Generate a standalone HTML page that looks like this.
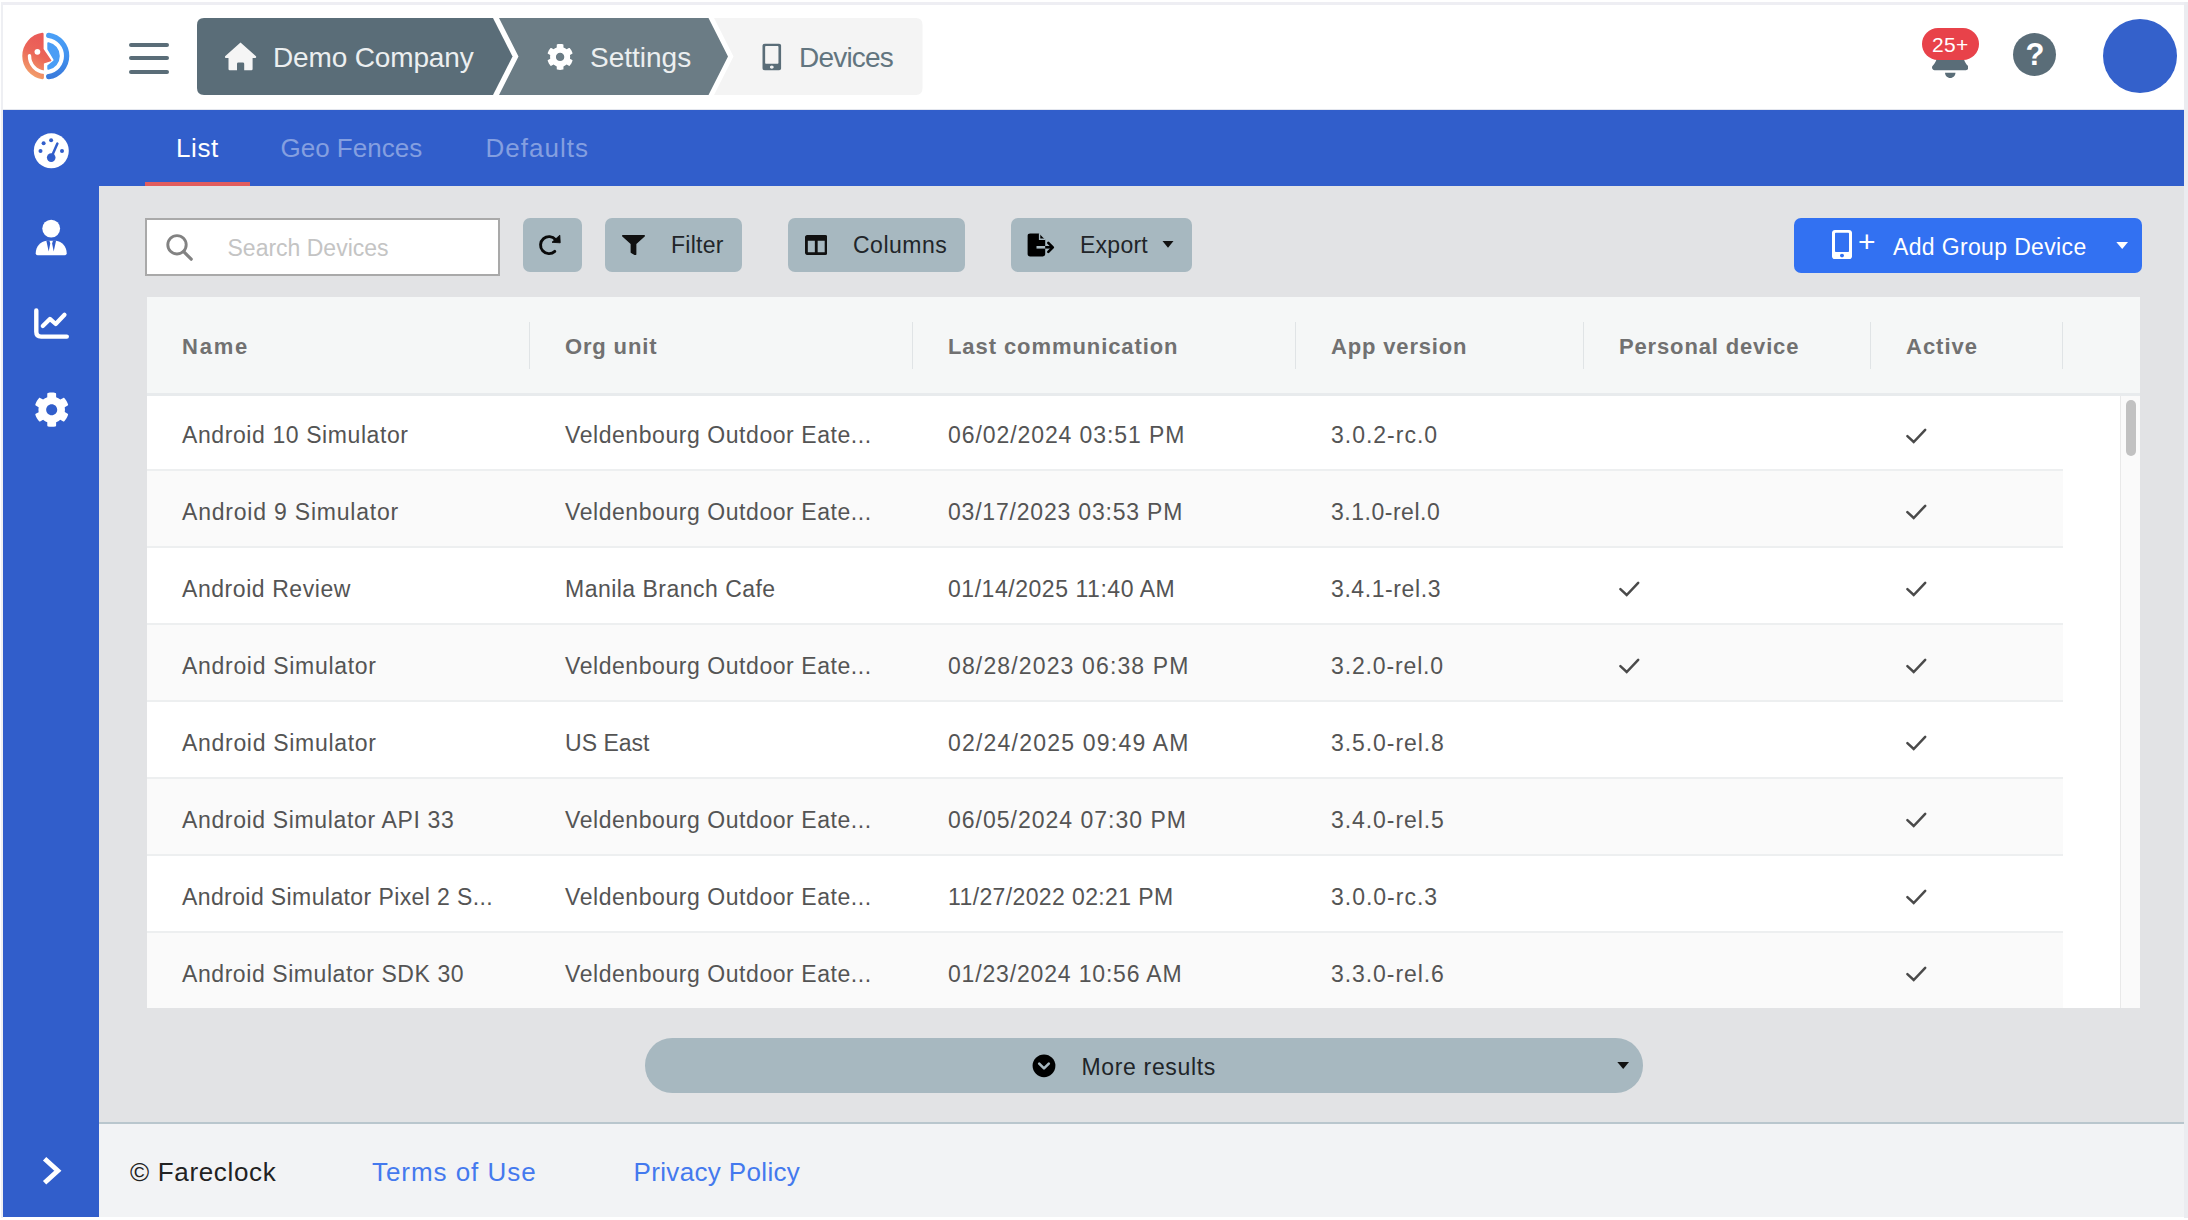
<!DOCTYPE html>
<html lang="en">
<head>
<meta charset="utf-8">
<title>Devices - Fareclock</title>
<style>
*{box-sizing:border-box;margin:0;padding:0}
html,body{width:2188px;height:1220px;overflow:hidden;background:#fff}
body{position:relative;font-family:"Liberation Sans",sans-serif;color:#222}
.abs{position:absolute}
.t{position:absolute;white-space:nowrap;line-height:1}
/* frame */
#frame-top{left:2px;top:2px;width:2186px;height:3px;background:#eeeef3}
#frame-left{left:1.300px;top:2px;width:2.100px;height:1216px;background:#eeeff3}
#frame-right{left:2184px;top:2px;width:4px;height:1216px;background:#ebecf0}
/* header */
#header{left:3.400px;top:5px;width:2180.600px;height:105.600px;background:#fff}
#hdrline{left:3.400px;top:109px;width:2180.600px;height:1.300px;background:#e3e6ee}
/* blue */
#bluebar{left:3.400px;top:110.300px;width:2180.600px;height:76.100px;background:#315ecb}
#sidebar{left:3.400px;top:110.300px;width:95.600px;height:1106.900px;background:#315ecb}
#content{left:99px;top:186.400px;width:2085px;height:937px;background:#e2e3e5}
#footer{left:99px;top:1121.600px;width:2085px;height:95px;background:#f2f3f5;border-top:2px solid #b9c6cd}
.th{font-size:22px;font-weight:700;color:#717171}
.td{font-size:23px;color:#545454}
.ft{font-size:26px}
.btn{border-radius:7px;background:#a7b8c0}
.bt{font-size:23px;letter-spacing:.25px;color:#212529}
</style>
</head>
<body>
<div class="abs" id="header"></div>
<div class="abs" id="hdrline"></div>
<div class="abs" id="bluebar"></div>
<div class="abs" id="content"></div>
<div class="abs" id="sidebar"></div>
<div class="abs" id="footer"></div>
<div class="abs" id="frame-top"></div>
<div class="abs" id="frame-left"></div>
<div class="abs" id="frame-right"></div>
<!--HEADER-->
<!-- logo -->
<svg class="abs" style="left:16px;top:26px" width="60" height="60" viewBox="16 26 60 60">
  <defs>
    <linearGradient id="lg1" gradientUnits="userSpaceOnUse" x1="26" y1="76" x2="46" y2="40"><stop offset="0" stop-color="#f3a56c"/><stop offset="0.6" stop-color="#eb6559"/><stop offset="1" stop-color="#ea5b58"/></linearGradient>
    <linearGradient id="lg2" gradientUnits="userSpaceOnUse" x1="55" y1="36" x2="60" y2="76"><stop offset="0" stop-color="#4a9ff6"/><stop offset="0.5" stop-color="#4293f0"/><stop offset="1" stop-color="#3a7bdc"/></linearGradient>
  </defs>
  <path d="M42.200 32.860 Q43.600 32.700 43.600 34 V49 L51.300 60.200 Q51.600 61 50.800 61.300 L43.900 63.500 V78 Q43.800 79.300 42.200 79.140 A23.400 23.400 0 0 1 42.200 32.860 Z" fill="url(#lg1)"/>
  <path d="M29.500 55.800 A16.200 16.200 0 0 0 44.500 72.200" fill="none" stroke="#fff" stroke-width="3.400" stroke-linecap="round"/>
  <circle cx="37.400" cy="51.800" r="2.900" fill="#fff"/>
  <path d="M48.700 35.400 A20.800 20.800 0 0 1 48.700 76.600" fill="none" stroke="url(#lg2)" stroke-width="5.300" stroke-linecap="round"/>
  <path d="M47.300 43.200 Q47.300 41.900 48.600 42.200 A14.100 14.100 0 0 1 48.600 69.800 Q47.300 70.100 47.300 68.800 V65.400 L53.200 60.800 Q53.800 60.200 53.400 59.500 L47.300 49.300 Z" fill="#4a9df5"/>
</svg>
<!-- hamburger -->
<div class="abs" style="left:129px;top:43px;width:40px;height:4px;border-radius:2px;background:#5a6d78"></div>
<div class="abs" style="left:129px;top:56px;width:40px;height:4px;border-radius:2px;background:#5a6d78"></div>
<div class="abs" style="left:129px;top:69.500px;width:40px;height:4px;border-radius:2px;background:#5a6d78"></div>
<!-- breadcrumb -->
<svg class="abs" style="left:190px;top:10px" width="740" height="95" viewBox="190 10 740 95">
  <path d="M204 18 H493 L512.5 56.5 L493 95 H204 Q197 95 197 88 V25 Q197 18 204 18 Z" fill="#5a6d78"/>
  <path d="M499 18 H708.5 L728 56.5 L708.5 95 H499 L518.5 56.5 Z" fill="#6b7c85"/>
  <path d="M714 18 H916 Q922.5 18 922.5 25 V88 Q922.5 95 916 95 H714 L733.5 56.500 Z" fill="#f4f4f4"/>
  <!-- home icon -->
  <path fill="#f5f5f5" d="M240.500 42.600 L256 56.300 Q256.600 57.500 255.500 58.100 H252.600 V69 Q252.600 70.200 251.400 70.200 H244.200 V63.800 Q244.200 62.400 242.800 62.400 H238.400 Q237 62.400 237 63.800 V70.200 H229.700 Q228.500 70.200 228.500 69 V58.100 H225.600 Q224.500 57.500 225.100 56.300 Z"/>
  <!-- cog -->
  <svg x="546.700" y="43.500" width="26.800" height="26.800" viewBox="0 0 512 512"><path fill="#fff" d="M487.400 315.700l-42.600-24.600c4.300-23.200 4.300-47 0-70.200l42.600-24.600c4.900-2.800 7.100-8.600 5.500-14-11.100-35.600-30-67.800-54.700-94.600-3.800-4.100-10-5.100-14.800-2.300L380.800 110c-17.900-15.400-38.500-27.300-60.800-35.100V25.800c0-5.600-3.900-10.500-9.400-11.700-36.700-8.200-74.300-7.800-109.200 0-5.500 1.200-9.400 6.100-9.400 11.700V75c-22.200 7.900-42.800 19.800-60.800 35.100L88.700 85.500c-4.900-2.800-11-1.900-14.800 2.300-24.700 26.700-43.600 58.900-54.700 94.600-1.700 5.400.6 11.200 5.500 14L67.300 221c-4.300 23.200-4.300 47 0 70.200l-42.600 24.600c-4.900 2.800-7.100 8.600-5.500 14 11.100 35.600 30 67.800 54.700 94.600 3.800 4.100 10 5.100 14.800 2.300l42.600-24.600c17.900 15.400 38.500 27.300 60.800 35.100v49.200c0 5.600 3.900 10.500 9.400 11.700 36.700 8.200 74.300 7.800 109.200 0 5.500-1.200 9.400-6.100 9.400-11.700v-49.200c22.200-7.900 42.800-19.800 60.800-35.100l42.600 24.600c4.900 2.800 11 1.900 14.800-2.300 24.700-26.700 43.600-58.900 54.700-94.600 1.500-5.500-.7-11.300-5.600-14.100zM256 336c-44.100 0-80-35.900-80-80s35.900-80 80-80 80 35.900 80 80-35.900 80-80 80z"/></svg>
  <!-- mobile -->
  <svg x="762.300" y="43.600" width="19" height="26.800" viewBox="0 0 320 512" preserveAspectRatio="none"><path fill="#5a6d78" d="M272 0H48C21.500 0 0 21.500 0 48v416c0 26.500 21.500 48 48 48h224c26.500 0 48-21.500 48-48V48c0-26.500-21.500-48-48-48zM160 480c-17.700 0-32-14.300-32-32s14.300-32 32-32 32 14.300 32 32-14.300 32-32 32zm112-108c0 6.600-5.400 12-12 12H60c-6.600 0-12-5.400-12-12V60c0-6.600 5.400-12 12-12h200c6.600 0 12 5.400 12 12v312z"/></svg>
</svg>
<span class="t" id="bc1" style="left:273px;top:43.600px;font-size:28px;color:#eceff0;letter-spacing:-.15px">Demo Company</span>
<span class="t" id="bc2" style="left:590px;top:43.600px;font-size:28px;color:#eceff0">Settings</span>
<span class="t" id="bc3" style="left:799px;top:44px;font-size:28px;color:#62757f;letter-spacing:-.8px">Devices</span>
<!-- bell -->
<svg class="abs" style="left:1931.700px;top:35.600px" width="36.500" height="42" viewBox="0 0 448 512" preserveAspectRatio="none"><path fill="#5a6d78" d="M224 512c35.320 0 63.970-28.650 63.970-64H160.030c0 35.350 28.650 64 63.970 64zm215.390-149.710c-19.320-20.760-55.470-51.990-55.470-154.290 0-77.700-54.480-139.900-127.940-155.160V32c0-17.670-14.320-32-31.980-32s-31.980 14.330-31.980 32v20.840C118.560 68.100 64.080 130.300 64.080 208c0 102.300-36.150 133.530-55.470 154.290-6 6.450-8.660 14.160-8.610 21.710.11 16.400 12.980 32 32.100 32h383.800c19.120 0 32-15.600 32.100-32 .05-7.550-2.610-15.270-8.610-21.710z"/></svg>
<div class="abs" id="badge" style="left:1921.500px;top:27.500px;width:57px;height:32.500px;border-radius:16.250px;background:#e8424a"></div>
<span class="t" id="badget" style="left:1932px;top:33.500px;font-size:21px;color:#fff;letter-spacing:.3px">25+</span>
<!-- help -->
<div class="abs" style="left:2013px;top:33px;width:43px;height:43px;border-radius:50%;background:#5a6d78"></div>
<span class="t" id="qm" style="left:2025.500px;top:39px;font-size:31px;font-weight:700;color:#fff">?</span>
<!-- avatar -->
<div class="abs" style="left:2103px;top:19px;width:74px;height:74px;border-radius:50%;background:#3461cb"></div>
<!--/HEADER-->
<!--TABS-->
<span class="t" id="tab1" style="left:176px;top:134.500px;font-size:26px;color:#fff;letter-spacing:.6px">List</span>
<span class="t" id="tab2" style="left:280.500px;top:135px;font-size:26px;color:#849fe0">Geo Fences</span>
<span class="t" id="tab3" style="left:485.500px;top:135px;font-size:26px;color:#849fe0;letter-spacing:1px">Defaults</span>
<div class="abs" style="left:145px;top:182px;width:105px;height:4px;background:#e25d5d"></div>
<!--/TABS-->
<!--TOOLBAR-->
<!-- search -->
<div class="abs" style="left:145px;top:218px;width:355px;height:58px;background:#fff;border:2px solid #a9a9a9"></div>
<svg class="abs" style="left:164px;top:232px" width="32" height="32" viewBox="164 232 32 32"><circle cx="177" cy="244.800" r="9.200" fill="none" stroke="#828282" stroke-width="2.900"/><path d="M183.700 251.700 L191.200 259.200" stroke="#828282" stroke-width="3.200" stroke-linecap="round"/></svg>
<span class="t" id="srch" style="left:227.500px;top:236.500px;font-size:23px;color:#c4c4c4">Search Devices</span>
<!-- refresh -->
<div class="abs btn" style="left:522.500px;top:218px;width:59px;height:54px"></div>
<svg class="abs" style="left:536px;top:231px" width="30" height="30" viewBox="536 231 30 30"><path d="M555.600 239.700 A8.500 8.500 0 1 0 554.800 251.400" fill="none" stroke="#0a0a0a" stroke-width="2.900" stroke-linecap="round"/><path d="M559.800 235.200 L560.200 242.800 L552 242.300 Z" fill="#0a0a0a" stroke="#0a0a0a" stroke-width="0.900" stroke-linejoin="round"/></svg>
<!-- filter -->
<div class="abs btn" style="left:605px;top:218px;width:137px;height:54px"></div>
<svg class="abs" style="left:622.200px;top:234.700px" width="23" height="20.300" viewBox="0 0 512 512" preserveAspectRatio="none"><path fill="#111" d="M487.976 0H24.028C2.710 0-8.047 25.866 7.058 40.971L192 225.941V432c0 7.831 3.821 15.170 10.237 19.662l80 55.980C298.020 518.690 320 507.493 320 487.980V225.941l184.947-184.970C520.021 25.896 509.338 0 487.976 0z"/></svg>
<span class="t bt" id="b1" style="left:671px;top:234px">Filter</span>
<!-- columns -->
<div class="abs btn" style="left:787.500px;top:218px;width:177px;height:54px"></div>
<svg class="abs" style="left:804.500px;top:235px" width="22.500" height="20" viewBox="0 32 512 448" preserveAspectRatio="none"><path fill="#111" d="M464 32H48C21.490 32 0 53.490 0 80v352c0 26.510 21.490 48 48 48h416c26.510 0 48-21.490 48-48V80c0-26.510-21.490-48-48-48zM224 416H64V160h160v256zm224 0H288V160h160v256z"/></svg>
<span class="t bt" id="b2" style="left:853px;top:234px;letter-spacing:.5px">Columns</span>
<!-- export -->
<div class="abs btn" style="left:1010.500px;top:218px;width:181px;height:54px"></div>
<svg class="abs" style="left:1026px;top:232px" width="30" height="26" viewBox="1026 232 30 26"><path d="M1030.200 233.600 H1039 L1045.200 239.800 V254 Q1045.200 256.400 1042.800 256.400 H1030.200 Q1027.600 256.400 1027.600 254 V236 Q1027.600 233.600 1030.200 233.600 Z" fill="#000"/><path d="M1039.600 233.600 V239.300 H1045.200" fill="none" stroke="#a7b8c0" stroke-width="1.400"/><path d="M1036.500 247.300 H1045.200" stroke="#a7b8c0" stroke-width="2.600" stroke-linecap="butt"/><path d="M1045.200 247.300 H1051.800" stroke="#000" stroke-width="2.600"/><path d="M1048.300 242.800 L1052.800 247.300 L1048.300 251.800" fill="none" stroke="#000" stroke-width="2.600" stroke-linecap="round" stroke-linejoin="round"/></svg>
<span class="t bt" id="b3" style="left:1080px;top:234px">Export</span>
<svg class="abs" style="left:1162px;top:240.500px" width="12" height="7" viewBox="0 0 12 7"><path d="M0.500 0 H11.500 L6 6.800 Z" fill="#111"/></svg>
<!-- add group device -->
<div class="abs" style="left:1793.500px;top:217.500px;width:348px;height:55.500px;border-radius:7px;background:#3271f2"></div>
<svg class="abs" style="left:1831.800px;top:229.500px" width="20" height="29.200" viewBox="0 0 320 512" preserveAspectRatio="none"><path fill="#fff" d="M272 0H48C21.500 0 0 21.500 0 48v416c0 26.500 21.500 48 48 48h224c26.500 0 48-21.500 48-48V48c0-26.500-21.500-48-48-48zM160 480c-17.700 0-32-14.300-32-32s14.300-32 32-32 32 14.300 32 32-14.300 32-32 32zm112-108c0 6.600-5.400 12-12 12H60c-6.600 0-12-5.400-12-12V60c0-6.600 5.400-12 12-12h200c6.600 0 12 5.400 12 12v312z"/></svg>
<span class="t" id="plus" style="left:1858px;top:226.700px;font-size:30px;color:#fff;font-weight:400">+</span>
<span class="t bt" id="b4" style="left:1893px;top:235.500px;color:#fff;letter-spacing:.35px">Add Group Device</span>
<svg class="abs" style="left:2115.500px;top:242px" width="12.400" height="7" viewBox="0 0 12 7" preserveAspectRatio="none"><path d="M0.300 0 H11.700 L6 6.900 Z" fill="#fff"/></svg>
<!--/TOOLBAR-->
<!--TABLE-->
<div class="abs" id="tbl" style="left:147px;top:297px;width:1993px;height:711px;background:#fff;overflow:hidden">
<div class="abs" style="left:0;top:0;width:1993px;height:96px;background:#f5f7f7"></div>
<div class="abs" style="left:0;top:96px;width:1993px;height:2.500px;background:#e8ebed;z-index:2"></div>
<div class="abs" style="left:381.5px;top:25px;width:1.500px;height:47px;background:#e0e4e6"></div>
<div class="abs" style="left:764.5px;top:25px;width:1.500px;height:47px;background:#e0e4e6"></div>
<div class="abs" style="left:1147.5px;top:25px;width:1.500px;height:47px;background:#e0e4e6"></div>
<div class="abs" style="left:1435.5px;top:25px;width:1.500px;height:47px;background:#e0e4e6"></div>
<div class="abs" style="left:1722.5px;top:25px;width:1.500px;height:47px;background:#e0e4e6"></div>
<div class="abs" style="left:1914.5px;top:25px;width:1.500px;height:47px;background:#e0e4e6"></div>
<span class="t th" style="left:35px;top:39px;letter-spacing:1.78px">Name</span>
<span class="t th" style="left:418px;top:39px;letter-spacing:0.85px">Org unit</span>
<span class="t th" style="left:801px;top:39px;letter-spacing:0.92px">Last communication</span>
<span class="t th" style="left:1184px;top:39px;letter-spacing:0.84px">App version</span>
<span class="t th" style="left:1472px;top:39px;letter-spacing:0.85px">Personal device</span>
<span class="t th" style="left:1759px;top:39px;letter-spacing:0.99px">Active</span>
<div class="abs" style="left:0;top:97.60px;width:1916px;height:76.875px;background:#fff;border-bottom:2px solid #edeff0"></div>
<span class="t td" style="left:35px;top:127.40px;letter-spacing:0.59px">Android 10 Simulator</span>
<span class="t td" style="left:418px;top:127.40px;letter-spacing:0.56px">Veldenbourg Outdoor Eate...</span>
<span class="t td" style="left:801px;top:127.40px;letter-spacing:0.92px">06/02/2024 03:51 PM</span>
<span class="t td" style="left:1184px;top:127.40px;letter-spacing:0.99px">3.0.2-rc.0</span>
<svg class="abs" style="left:1758px;top:128.50px" width="24" height="20" viewBox="-1 -2 24 20"><path d="M1.400 8.200 L7.700 14 L19.200 1.800" fill="none" stroke="#4a4a4a" stroke-width="2.500" stroke-linecap="round" stroke-linejoin="miter"/></svg>
<div class="abs" style="left:0;top:174.48px;width:1916px;height:76.875px;background:#fafafa;border-bottom:2px solid #edeff0"></div>
<span class="t td" style="left:35px;top:204.28px;letter-spacing:0.79px">Android 9 Simulator</span>
<span class="t td" style="left:418px;top:204.28px;letter-spacing:0.56px">Veldenbourg Outdoor Eate...</span>
<span class="t td" style="left:801px;top:204.28px;letter-spacing:0.80px">03/17/2023 03:53 PM</span>
<span class="t td" style="left:1184px;top:204.28px;letter-spacing:0.52px">3.1.0-rel.0</span>
<svg class="abs" style="left:1758px;top:205.38px" width="24" height="20" viewBox="-1 -2 24 20"><path d="M1.400 8.200 L7.700 14 L19.200 1.800" fill="none" stroke="#4a4a4a" stroke-width="2.500" stroke-linecap="round" stroke-linejoin="miter"/></svg>
<div class="abs" style="left:0;top:251.35px;width:1916px;height:76.875px;background:#fff;border-bottom:2px solid #edeff0"></div>
<span class="t td" style="left:35px;top:281.15px;letter-spacing:0.56px">Android Review</span>
<span class="t td" style="left:418px;top:281.15px;letter-spacing:0.48px">Manila Branch Cafe</span>
<span class="t td" style="left:801px;top:281.15px;letter-spacing:0.54px">01/14/2025 11:40 AM</span>
<span class="t td" style="left:1184px;top:281.15px;letter-spacing:0.59px">3.4.1-rel.3</span>
<svg class="abs" style="left:1471px;top:282.25px" width="24" height="20" viewBox="-1 -2 24 20"><path d="M1.400 8.200 L7.700 14 L19.200 1.800" fill="none" stroke="#4a4a4a" stroke-width="2.500" stroke-linecap="round" stroke-linejoin="miter"/></svg>
<svg class="abs" style="left:1758px;top:282.25px" width="24" height="20" viewBox="-1 -2 24 20"><path d="M1.400 8.200 L7.700 14 L19.200 1.800" fill="none" stroke="#4a4a4a" stroke-width="2.500" stroke-linecap="round" stroke-linejoin="miter"/></svg>
<div class="abs" style="left:0;top:328.23px;width:1916px;height:76.875px;background:#fafafa;border-bottom:2px solid #edeff0"></div>
<span class="t td" style="left:35px;top:358.03px;letter-spacing:0.70px">Android Simulator</span>
<span class="t td" style="left:418px;top:358.03px;letter-spacing:0.56px">Veldenbourg Outdoor Eate...</span>
<span class="t td" style="left:801px;top:358.03px;letter-spacing:1.14px">08/28/2023 06:38 PM</span>
<span class="t td" style="left:1184px;top:358.03px;letter-spacing:0.86px">3.2.0-rel.0</span>
<svg class="abs" style="left:1471px;top:359.12px" width="24" height="20" viewBox="-1 -2 24 20"><path d="M1.400 8.200 L7.700 14 L19.200 1.800" fill="none" stroke="#4a4a4a" stroke-width="2.500" stroke-linecap="round" stroke-linejoin="miter"/></svg>
<svg class="abs" style="left:1758px;top:359.12px" width="24" height="20" viewBox="-1 -2 24 20"><path d="M1.400 8.200 L7.700 14 L19.200 1.800" fill="none" stroke="#4a4a4a" stroke-width="2.500" stroke-linecap="round" stroke-linejoin="miter"/></svg>
<div class="abs" style="left:0;top:405.10px;width:1916px;height:76.875px;background:#fff;border-bottom:2px solid #edeff0"></div>
<span class="t td" style="left:35px;top:434.90px;letter-spacing:0.70px">Android Simulator</span>
<span class="t td" style="left:418px;top:434.90px;letter-spacing:0.02px">US East</span>
<span class="t td" style="left:801px;top:434.90px;letter-spacing:1.21px">02/24/2025 09:49 AM</span>
<span class="t td" style="left:1184px;top:434.90px;letter-spacing:0.93px">3.5.0-rel.8</span>
<svg class="abs" style="left:1758px;top:436.00px" width="24" height="20" viewBox="-1 -2 24 20"><path d="M1.400 8.200 L7.700 14 L19.200 1.800" fill="none" stroke="#4a4a4a" stroke-width="2.500" stroke-linecap="round" stroke-linejoin="miter"/></svg>
<div class="abs" style="left:0;top:481.98px;width:1916px;height:76.875px;background:#fafafa;border-bottom:2px solid #edeff0"></div>
<span class="t td" style="left:35px;top:511.78px;letter-spacing:0.64px">Android Simulator API 33</span>
<span class="t td" style="left:418px;top:511.78px;letter-spacing:0.56px">Veldenbourg Outdoor Eate...</span>
<span class="t td" style="left:801px;top:511.78px;letter-spacing:1.00px">06/05/2024 07:30 PM</span>
<span class="t td" style="left:1184px;top:511.78px;letter-spacing:0.93px">3.4.0-rel.5</span>
<svg class="abs" style="left:1758px;top:512.88px" width="24" height="20" viewBox="-1 -2 24 20"><path d="M1.400 8.200 L7.700 14 L19.200 1.800" fill="none" stroke="#4a4a4a" stroke-width="2.500" stroke-linecap="round" stroke-linejoin="miter"/></svg>
<div class="abs" style="left:0;top:558.85px;width:1916px;height:76.875px;background:#fff;border-bottom:2px solid #edeff0"></div>
<span class="t td" style="left:35px;top:588.65px;letter-spacing:0.40px">Android Simulator Pixel 2 S...</span>
<span class="t td" style="left:418px;top:588.65px;letter-spacing:0.56px">Veldenbourg Outdoor Eate...</span>
<span class="t td" style="left:801px;top:588.65px;letter-spacing:0.38px">11/27/2022 02:21 PM</span>
<span class="t td" style="left:1184px;top:588.65px;letter-spacing:0.99px">3.0.0-rc.3</span>
<svg class="abs" style="left:1758px;top:589.75px" width="24" height="20" viewBox="-1 -2 24 20"><path d="M1.400 8.200 L7.700 14 L19.200 1.800" fill="none" stroke="#4a4a4a" stroke-width="2.500" stroke-linecap="round" stroke-linejoin="miter"/></svg>
<div class="abs" style="left:0;top:635.73px;width:1916px;height:76.875px;background:#fafafa;border-bottom:2px solid #edeff0"></div>
<span class="t td" style="left:35px;top:665.52px;letter-spacing:0.57px">Android Simulator SDK 30</span>
<span class="t td" style="left:418px;top:665.52px;letter-spacing:0.56px">Veldenbourg Outdoor Eate...</span>
<span class="t td" style="left:801px;top:665.52px;letter-spacing:0.83px">01/23/2024 10:56 AM</span>
<span class="t td" style="left:1184px;top:665.52px;letter-spacing:0.93px">3.3.0-rel.6</span>
<svg class="abs" style="left:1758px;top:666.62px" width="24" height="20" viewBox="-1 -2 24 20"><path d="M1.400 8.200 L7.700 14 L19.200 1.800" fill="none" stroke="#4a4a4a" stroke-width="2.500" stroke-linecap="round" stroke-linejoin="miter"/></svg>
<div class="abs" style="left:1973px;top:98.500px;width:20px;height:620px;background:#fafafa;border-left:1.500px solid #e9e9e9"></div>
<div class="abs" style="left:1979px;top:102.500px;width:9.500px;height:56px;border-radius:5px;background:#c1c1c1"></div>
</div>
<!--/TABLE-->
<!--MORE-->
<div class="abs" style="left:645px;top:1038.200px;width:997.500px;height:54.400px;border-radius:27.200px;background:#a7b8c0"></div>
<svg class="abs" style="left:1032px;top:1054px" width="24" height="24" viewBox="0 0 24 24"><circle cx="12" cy="11.800" r="11.400" fill="#000"/><path d="M7.200 9.600 L12 14.400 L16.800 9.600" fill="none" stroke="#a7b8c0" stroke-width="2.600" stroke-linecap="round" stroke-linejoin="round"/></svg>
<span class="t bt" id="more" style="left:1081.500px;top:1055.700px;letter-spacing:.66px">More results</span>
<svg class="abs" style="left:1616.500px;top:1062px" width="12.400" height="7" viewBox="0 0 12 7" preserveAspectRatio="none"><path d="M0.300 0 H11.700 L6 6.900 Z" fill="#111"/></svg>
<!--/MORE-->
<!--FOOTER-->
<span class="t ft" id="f1" style="left:130px;top:1159px;color:#222;letter-spacing:.67px">© Fareclock</span>
<span class="t ft" id="f2" style="left:372px;top:1159px;color:#4479ee;letter-spacing:.95px">Terms of Use</span>
<span class="t ft" id="f3" style="left:633.500px;top:1159px;color:#4479ee;letter-spacing:.35px">Privacy Policy</span>
<!--/FOOTER-->
<!--SIDEICONS-->
<svg class="abs" style="left:20px;top:120px" width="64" height="64" viewBox="20 120 64 64"><circle cx="51.300" cy="150.800" r="17.500" fill="#fff"/><g fill="#315ecb"><circle cx="40.500" cy="151" r="2"/><circle cx="43.600" cy="143.300" r="2"/><circle cx="51.100" cy="140.200" r="2"/><circle cx="62" cy="151" r="2"/><circle cx="51.200" cy="157.600" r="4.300"/></g><path d="M51.500 157 L57.400 143.600" stroke="#315ecb" stroke-width="2.500" stroke-linecap="round"/></svg>
<svg class="abs" style="left:20px;top:206px" width="64" height="64" viewBox="20 206 64 64"><circle cx="51.200" cy="228.600" r="8.900" fill="#fff"/><path d="M46.500 240.800 H56 C62 241.400 66.600 246.400 66.700 253.200 Q66.700 255.300 64.600 255.300 H37.800 Q35.700 255.300 35.700 253.200 C35.800 246.400 40.500 241.400 46.500 240.800 Z" fill="#fff"/><path d="M46.300 240.400 H49.400 L50.300 243.400 L48.700 251.600 Z M56.100 240.400 H53 L52.100 243.400 L53.700 251.600 Z" fill="#315ecb"/></svg>
<svg class="abs" style="left:20px;top:292px" width="64" height="64" viewBox="20 292 64 64"><path d="M36.300 310.400 V331.800 Q36.300 336.600 41.100 336.600 H66.800" fill="none" stroke="#fff" stroke-width="4.400" stroke-linecap="round"/><path d="M42.800 326 L49.900 318.900 L55.700 324 L64.500 314.800" fill="none" stroke="#fff" stroke-width="4.200" stroke-linecap="round" stroke-linejoin="round"/></svg>
<svg class="abs" style="left:33.600px;top:392.200px" width="35.400" height="35.400" viewBox="0 0 512 512"><path fill="#fff" d="M487.400 315.700l-42.600-24.600c4.300-23.200 4.300-47 0-70.200l42.600-24.600c4.900-2.800 7.100-8.600 5.500-14-11.100-35.600-30-67.800-54.700-94.600-3.800-4.100-10-5.100-14.800-2.300L380.800 110c-17.900-15.400-38.500-27.300-60.800-35.100V25.800c0-5.600-3.900-10.500-9.400-11.700-36.700-8.200-74.300-7.800-109.200 0-5.500 1.200-9.400 6.100-9.400 11.700V75c-22.200 7.900-42.800 19.800-60.800 35.100L88.700 85.500c-4.900-2.800-11-1.900-14.800 2.300-24.700 26.700-43.600 58.900-54.700 94.600-1.700 5.400.6 11.200 5.500 14L67.300 221c-4.300 23.200-4.300 47 0 70.200l-42.600 24.600c-4.900 2.800-7.100 8.600-5.500 14 11.100 35.600 30 67.800 54.700 94.600 3.800 4.100 10 5.100 14.800 2.300l42.600-24.600c17.900 15.400 38.500 27.300 60.800 35.100v49.200c0 5.600 3.900 10.500 9.400 11.700 36.700 8.200 74.300 7.800 109.200 0 5.500-1.200 9.400-6.100 9.400-11.700v-49.200c22.200-7.900 42.800-19.800 60.800-35.100l42.600 24.600c4.900 2.800 11 1.900 14.800-2.300 24.700-26.700 43.600-58.900 54.700-94.600 1.500-5.500-.7-11.300-5.600-14.100zM256 336c-44.100 0-80-35.900-80-80s35.900-80 80-80 80 35.900 80 80-35.900 80-80 80z"/></svg>
<svg class="abs" style="left:36px;top:1150px" width="32" height="42" viewBox="36 1150 32 42"><path d="M44.600 1158.800 L57.800 1170.800 L44.600 1182.800" fill="none" stroke="#fff" stroke-width="4.900"/></svg>
<!--/SIDEICONS-->
</body>
</html>
